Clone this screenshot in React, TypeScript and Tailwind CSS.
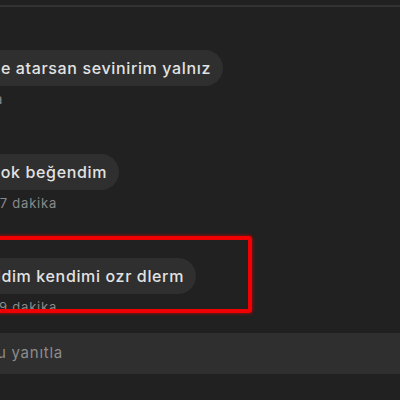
import React from 'react';

interface Comment {
  text: string;
  bubbleRight: number;
  time: string;
  timeRight: number;
}

const comments: Comment[] = [
  { text: 'ne atarsan sevinirim yalnız', bubbleRight: 223, time: '8 dakika', timeRight: 3 },
  { text: 'çok beğendim', bubbleRight: 119, time: '7 dakika', timeRight: 57 },
  { text: 'sildim kendimi ozr dlerm', bubbleRight: 196, time: '9 dakika', timeRight: 57 },
];

const CommentRow: React.FC<{ comment: Comment; last?: boolean }> = ({ comment, last }) => {
  return (
    <div className={last ? '' : 'mb-[45px]'}>
      {/* bubble runs off the left edge, only its tail end shows */}
      <div
        className="h-[36px] rounded-r-[18px] bg-[#2f2f2f] flex items-center justify-end pr-[12px] overflow-hidden whitespace-nowrap text-[16px] tracking-[0.04em] font-medium text-[#e2e2e2]"
        style={{ width: comment.bubbleRight }}
      >
        <span className="shrink-0">{comment.text}</span>
      </div>
      <div
        className="mt-[5px] h-[18px] flex items-center justify-end overflow-hidden whitespace-nowrap text-[13px] tracking-[0.06em] text-[#8a8a8a]"
        style={{ width: comment.timeRight }}
      >
        <span className="shrink-0">{comment.time}</span>
      </div>
    </div>
  );
};

export default function App() {
  return (
    <div
      className="relative w-[400px] h-[400px] bg-[#212121] overflow-hidden flex flex-col"
      style={{ fontFamily: 'Inter, "Noto Sans", sans-serif' }}
    >
      <div className="mt-[5px] h-[2px] bg-[#333333]" />

      <div className="pt-[43px]">
        {comments.map((c, i) => (
          <CommentRow key={i} comment={c} last={i === comments.length - 1} />
        ))}
      </div>

      <div className="mt-[16px] h-[41px] bg-[#2f2f2f] flex items-center">
        <div className="w-[63px] flex justify-end overflow-hidden whitespace-nowrap text-[15px] tracking-[0.05em] text-[#8c8c8c]">
          <span className="shrink-0">Yorumu yanıtla</span>
        </div>
      </div>

      {/* red annotation box */}
      <div className="absolute left-[-10px] top-[236px] w-[262px] h-[77px] border-4 border-[#f00000] rounded-[3px] shadow-[0_0_3px_1px_rgba(200,0,0,0.6)]" />
    </div>
  );
}
